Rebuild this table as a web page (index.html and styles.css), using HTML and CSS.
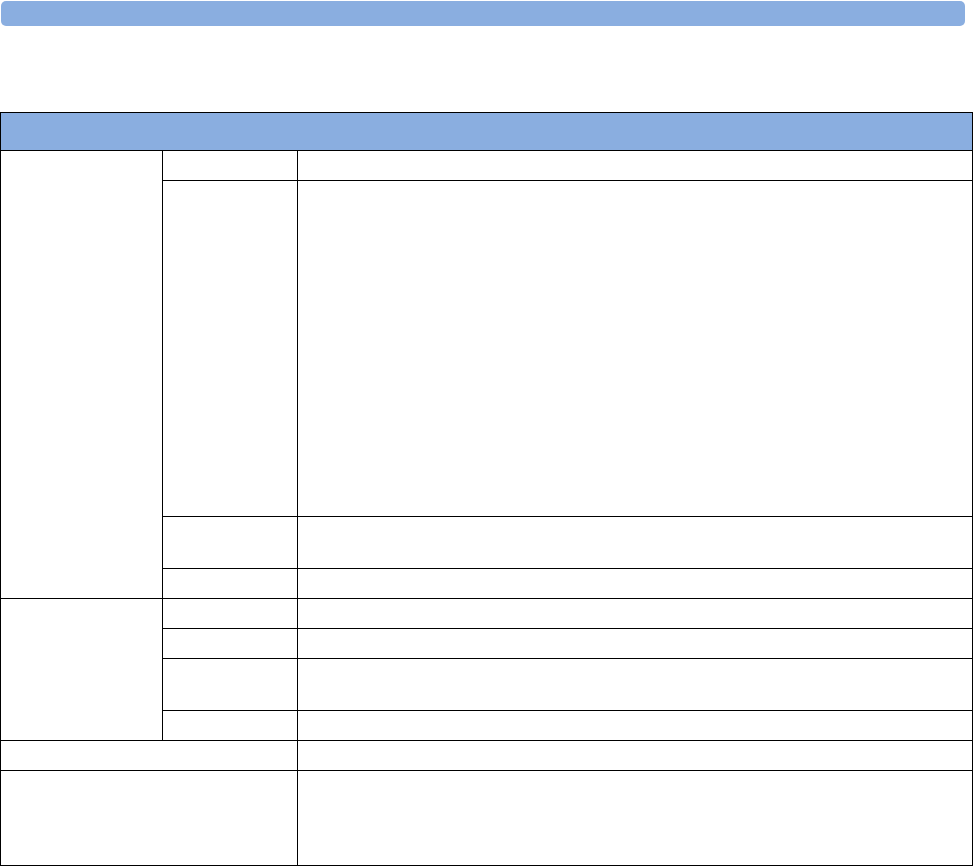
FILE: index.html
```html
<!DOCTYPE html>
<html lang="en">
<head>
    <meta charset="UTF-8">
    <title>Table</title>
    <link rel="stylesheet" href="styles.css">
</head>
<body>
    <div class="top-bar"></div>

    <table class="spec-table">
        <colgroup>
            <col class="col-a">
            <col class="col-b">
            <col class="col-c">
        </colgroup>
        <tr class="head-row"><th colspan="3"></th></tr>
        <tr class="h30"><td rowspan="4"></td><td></td><td></td></tr>
        <tr class="h336"><td></td><td></td></tr>
        <tr class="h52"><td></td><td></td></tr>
        <tr class="h30"><td></td><td></td></tr>
        <tr class="h30"><td rowspan="4"></td><td></td><td></td></tr>
        <tr class="h30"><td></td><td></td></tr>
        <tr class="h52"><td></td><td></td></tr>
        <tr class="h30"><td></td><td></td></tr>
        <tr class="h30"><td colspan="2"></td><td></td></tr>
        <tr class="h95"><td colspan="2"></td><td></td></tr>
    </table>
</body>
</html>
```

FILE: styles.css
```css
body {
    margin: 0;
    font-family: "Liberation Sans", Arial, sans-serif;
    background: #fff;
}

.top-bar {
    margin: 1px 0 0 1px;
    width: 964px;
    height: 25px;
    background-color: #8aaee0;
    border-radius: 5px;
}

.spec-table {
    margin-top: 86px;
    width: 973px;
    border-collapse: collapse;
    table-layout: fixed;
}
.col-a { width: 162px; }
.col-b { width: 135px; }
.spec-table th,
.spec-table td {
    border: 1px solid #000;
    padding: 0;
}
.spec-table th {
    background-color: #8aaee0;
}

.head-row { height: 38px; }
.h30 { height: 30px; }
.h52 { height: 52px; }
.h95 { height: 95px; }
.h336 { height: 336px; }
```
